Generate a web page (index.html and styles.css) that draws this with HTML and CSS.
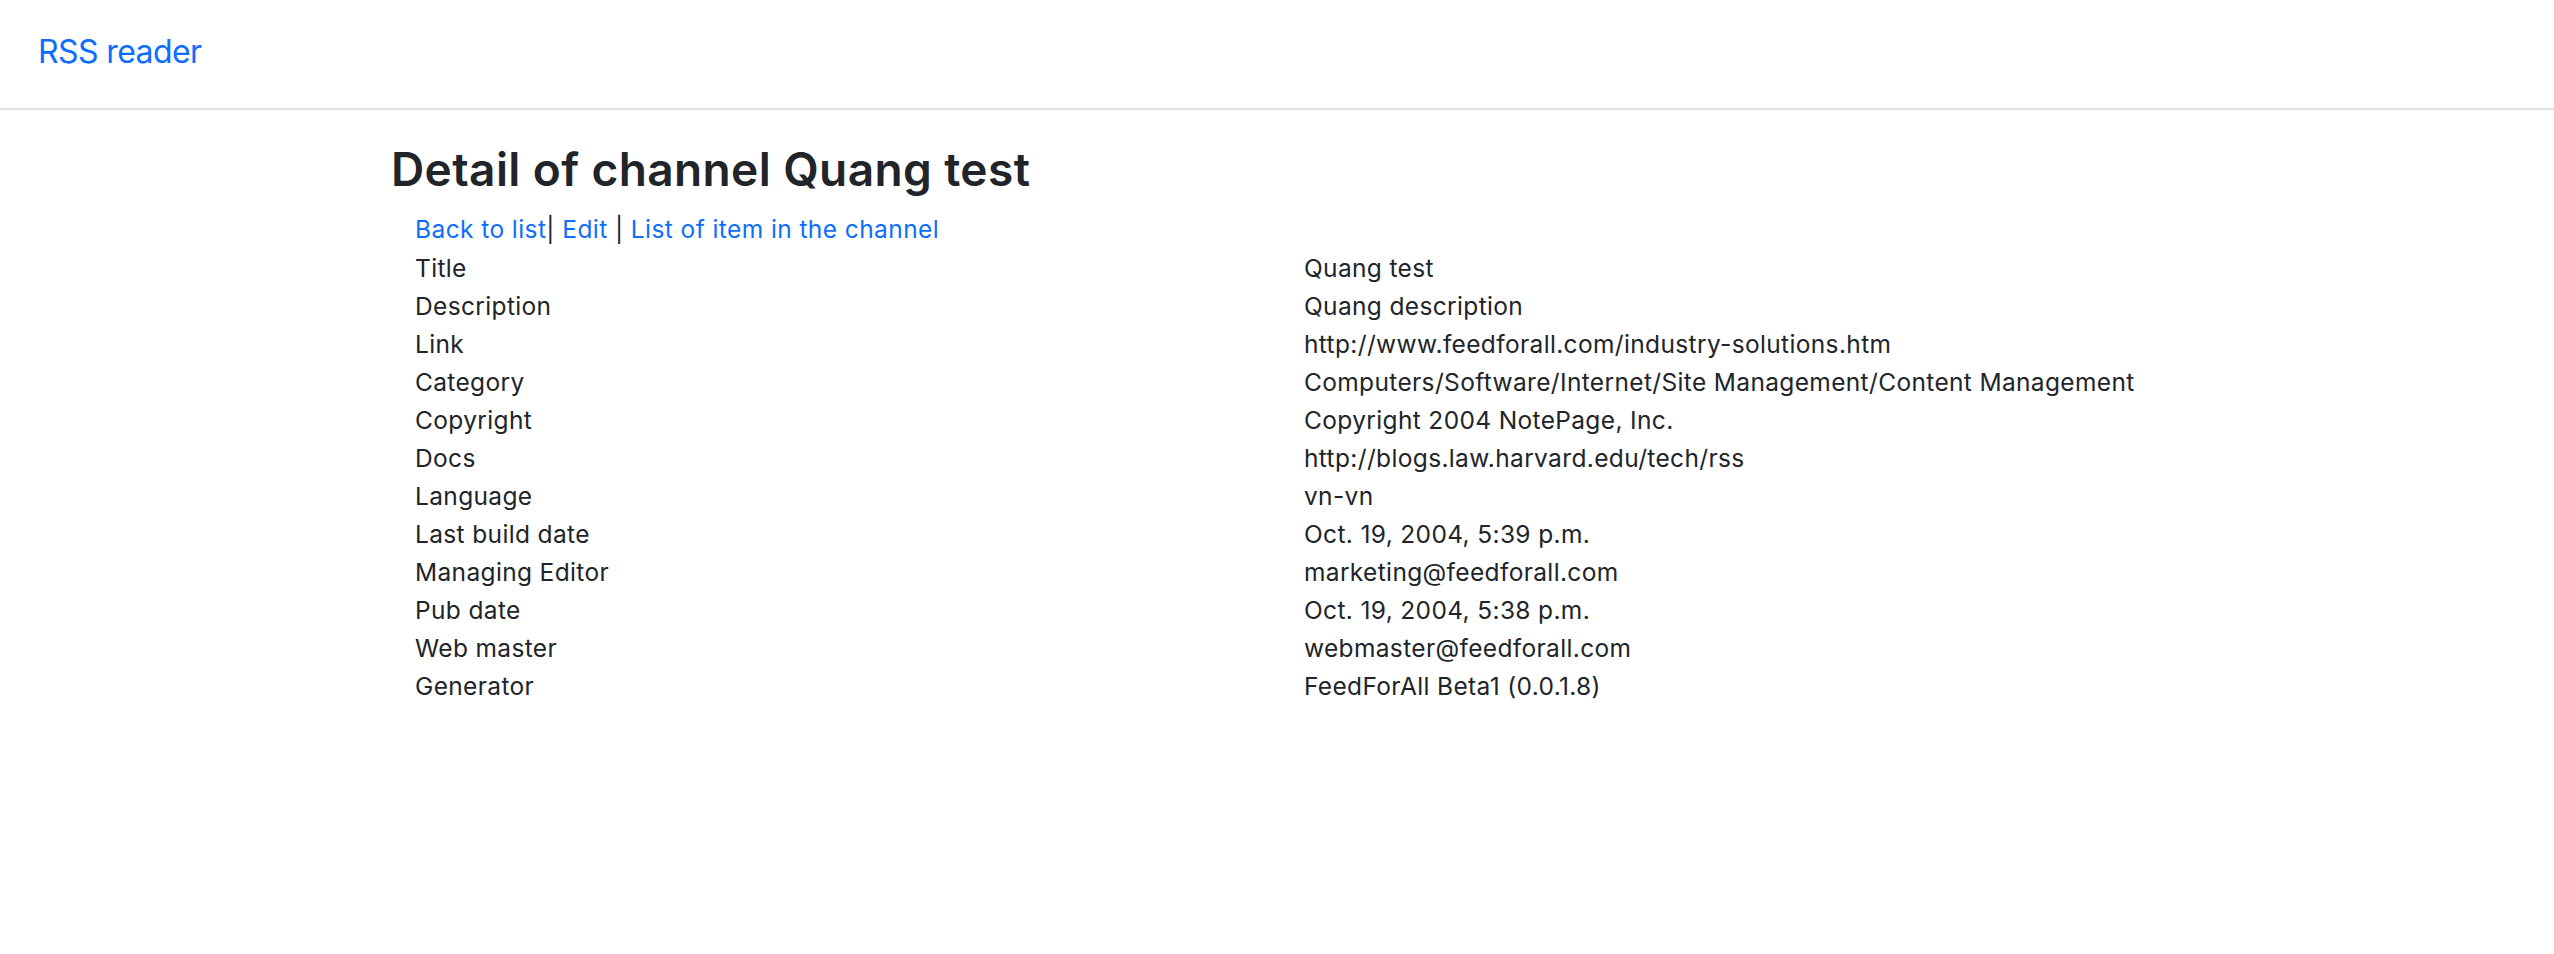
FILE: index.html
```html
<!DOCTYPE html>
<html lang="en">
<head>
<meta charset="utf-8">
<title>Detail of channel Quang test</title>
<link rel="stylesheet" href="styles.css">
</head>
<body>
<nav class="navbar">
  <a class="brand" href="#">RSS reader</a>
</nav>
<main class="container">
  <h1 class="title">Detail of channel Quang test</h1>
  <div class="detail">
    <div class="actions"><a href="#">Back to list</a>| <a href="#">Edit</a> | <a href="#">List of item in the channel</a></div>
    <div class="grid">
      <div>Title</div><div>Quang test</div>
      <div>Description</div><div>Quang description</div>
      <div>Link</div><div>http://www.feedforall.com/industry-solutions.htm</div>
      <div>Category</div><div>Computers/Software/Internet/Site Management/Content Management</div>
      <div>Copyright</div><div>Copyright 2004 NotePage, Inc.</div>
      <div>Docs</div><div>http://blogs.law.harvard.edu/tech/rss</div>
      <div>Language</div><div>vn-vn</div>
      <div>Last build date</div><div>Oct. 19, 2004, 5:39 p.m.</div>
      <div>Managing Editor</div><div>marketing@feedforall.com</div>
      <div>Pub date</div><div>Oct. 19, 2004, 5:38 p.m.</div>
      <div>Web master</div><div>webmaster@feedforall.com</div>
      <div>Generator</div><div>FeedForAll Beta1 (0.0.1.8)</div>
    </div>
  </div>
</main>
</body>
</html>
```
FILE: styles.css
```css
html, body {
  margin: 0;
  padding: 0;
  background: #fff;
}
body {
  font-family: Inter, "Noto Sans", sans-serif;
  font-size: 24.5px;
  line-height: 38px;
  letter-spacing: 0.35px;
  color: #212529;
}
a {
  color: #0d6efd;
  text-decoration: none;
}
.navbar {
  box-sizing: border-box;
  height: 110px;
  padding: 28px 0 0 38px;
  border-bottom: 2px solid #dee2e6;
}
.brand {
  display: inline-block;
  font-size: 32px;
  line-height: 48px;
  letter-spacing: -0.6px;
}
.container {
  padding-left: 391px;
  padding-top: 32px;
}
.title {
  margin: 0 0 14px 0;
  font-size: 46px;
  line-height: 55px;
  font-weight: 600;
  letter-spacing: 0.4px;
}
.detail {
  padding-left: 24px;
}
.actions {
  line-height: 37.6px;
  letter-spacing: 0.42px;
}
.grid {
  display: grid;
  grid-template-columns: 889px 1fr;
}
```
